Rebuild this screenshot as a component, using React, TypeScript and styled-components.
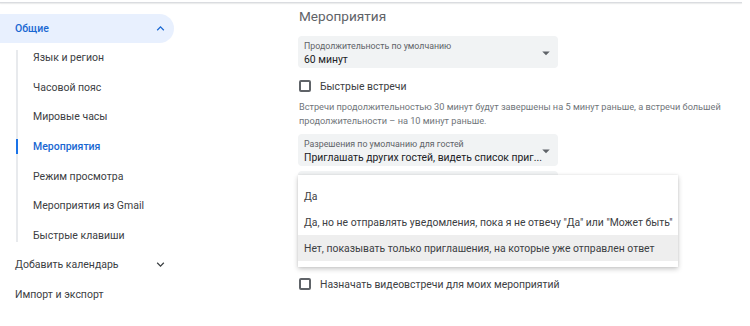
import React from 'react';
import styled, { createGlobalStyle } from 'styled-components';

const GlobalStyle = createGlobalStyle`
  html, body {
    margin: 0;
    padding: 0;
    background: #ffffff;
    font-family: Roboto, "Noto Sans", Arial, sans-serif;
    color: #3c4043;
  }
`;

const Page = styled.div`
  width: 750px;
  height: 326px;
  overflow: hidden;
  border-top: 2px solid #ffffff;
  display: flex;
  flex-direction: column;
`;

const TopEdge = styled.div`
  height: 1px;
  margin-right: 8px;
  background: #dadce0;
  box-shadow: 0 1px 1px rgba(60, 64, 67, 0.12);
`;

const Body = styled.div`
  display: flex;
  flex: 1;
`;

const Sidebar = styled.nav`
  width: 298px;
  flex-shrink: 0;
  padding-top: 11px;
`;

const GroupHead = styled.div<{ $open?: boolean }>`
  width: 174px;
  box-sizing: border-box;
  height: ${(p) => (p.$open ? '29px' : '29.6px')};
  padding: 0 6px 0 15px;
  display: flex;
  align-items: center;
  justify-content: space-between;
  border-radius: 0 15px 15px 0;
  background: ${(p) => (p.$open ? '#e8f0fe' : 'transparent')};
  color: ${(p) => (p.$open ? '#1967d2' : '#3c4043')};
  font-size: 10.5px;
  font-weight: ${(p) => (p.$open ? 500 : 400)};
`;

const SubList = styled.ul`
  list-style: none;
  margin: 0 0 0 16px;
  padding: 0;
  position: relative;

  &::before {
    content: '';
    position: absolute;
    left: 0;
    top: 7px;
    bottom: 8px;
    width: 2px;
    background: #e8eaed;
  }
`;

const SubItem = styled.li<{ $active?: boolean }>`
  position: relative;
  height: 29.6px;
  display: flex;
  align-items: center;
  padding-left: 17px;
  font-size: 10.5px;
  color: ${(p) => (p.$active ? '#1967d2' : '#3c4043')};
  font-weight: ${(p) => (p.$active ? 500 : 400)};

  &::before {
    content: '';
    display: ${(p) => (p.$active ? 'block' : 'none')};
    position: absolute;
    left: 0;
    top: 7px;
    width: 2px;
    height: 15px;
    background: #1a73e8;
  }
`;

const Main = styled.main`
  flex: 1;
  padding-top: 3px;
`;

const Heading = styled.h2`
  margin: 0 0 0 1px;
  font-size: 13.6px;
  line-height: 20px;
  font-weight: 400;
  color: #5f6368;
`;

const SelectBox = styled.div<{ $mt: number }>`
  position: relative;
  margin-top: ${(p) => p.$mt}px;
  width: 260px;
  height: 32px;
  box-sizing: border-box;
  padding: 5px 24px 0 6px;
  background: #f1f3f4;
  border-radius: 4px;
  display: flex;
  flex-direction: column;
`;

const SelectLabel = styled.span`
  font-size: 8.8px;
  line-height: 11px;
  color: #5f6368;
`;

const SelectValue = styled.span`
  font-size: 10.4px;
  line-height: 14px;
  margin-top: 1px;
  color: #202124;
  white-space: nowrap;
`;

const Arrow = styled.svg`
  position: absolute;
  right: 3px;
  top: 8px;
  width: 18px;
  height: 18px;
  fill: #5f6368;
`;

const CheckRow = styled.label<{ $mt: number }>`
  margin-top: ${(p) => p.$mt}px;
  display: flex;
  align-items: center;
  gap: 9px;
  font-size: 10.4px;
  color: #3c4043;
  height: 14px;
`;

const Box = styled.span`
  width: 12px;
  height: 12px;
  box-sizing: border-box;
  margin-left: 1px;
  border: 2px solid #5f6368;
  border-radius: 2px;
`;

const Help = styled.p`
  margin: 7px 0 0 1px;
  font-size: 9.2px;
  line-height: 14px;
  color: #70757a;
`;

const Menu = styled.ul`
  position: absolute;
  left: 0;
  top: 4px;
  z-index: 2;
  width: 380px;
  margin: 0;
  padding: 8px 0 6px;
  list-style: none;
  background: #ffffff;
  box-shadow: 0 2px 5px rgba(0, 0, 0, 0.22), 0 0 2px rgba(0, 0, 0, 0.08);
`;

const MenuItem = styled.li<{ $hover?: boolean }>`
  height: 26px;
  display: flex;
  align-items: center;
  padding-left: 6px;
  font-size: 10.4px;
  color: #3c4043;
  background: ${(p) => (p.$hover ? '#eeeeee' : 'transparent')};
  white-space: nowrap;
`;

const Chevron = ({ up, color }: { up?: boolean; color: string }) => (
  <svg width="15" height="15" viewBox="0 0 24 24" fill={color}>
    {up ? (
      <path d="M7.41 15.41L12 10.83l4.59 4.58L18 14l-6-6-6 6z" />
    ) : (
      <path d="M7.41 8.59L12 13.17l4.59-4.58L18 10l-6 6-6-6z" />
    )}
  </svg>
);

const DropArrow = () => (
  <Arrow viewBox="0 0 24 24">
    <path d="M7 10l5 5 5-5z" />
  </Arrow>
);

const subItems = [
  'Язык и регион',
  'Часовой пояс',
  'Мировые часы',
  'Мероприятия',
  'Режим просмотра',
  'Мероприятия из Gmail',
  'Быстрые клавиши',
];

const options = [
  'Да',
  'Да, но не отправлять уведомления, пока я не отвечу "Да" или "Может быть"',
  'Нет, показывать только приглашения, на которые уже отправлен ответ',
];

const App: React.FC = () => {
  return (
    <Page>
      <GlobalStyle />
      <TopEdge />
      <Body>
        <Sidebar>
          <GroupHead $open>
            Общие
            <Chevron up color="#1967d2" />
          </GroupHead>
          <SubList>
            {subItems.map((s) => (
              <SubItem key={s} $active={s === 'Мероприятия'}>
                {s}
              </SubItem>
            ))}
          </SubList>
          <GroupHead>
            Добавить календарь
            <Chevron color="#3c4043" />
          </GroupHead>
          <GroupHead>Импорт и экспорт</GroupHead>
        </Sidebar>

        <Main>
          <Heading>Мероприятия</Heading>
          <SelectBox $mt={10}>
            <SelectLabel>Продолжительность по умолчанию</SelectLabel>
            <SelectValue>60 минут</SelectValue>
            <DropArrow />
          </SelectBox>
          <CheckRow $mt={11}>
            <Box />
            Быстрые встречи
          </CheckRow>
          <Help>
            Встречи продолжительностью 30 минут будут завершены на 5 минут раньше, а встречи большей
            <br />
            продолжительности – на 10 минут раньше.
          </Help>
          <SelectBox $mt={6}>
            <SelectLabel>Разрешения по умолчанию для гостей</SelectLabel>
            <SelectValue>Приглашать других гостей, видеть список приг...</SelectValue>
            <DropArrow />
          </SelectBox>
          <SelectBox $mt={5}>
            <SelectLabel>Добавлять приглашения в мой календарь</SelectLabel>
            <SelectValue>Да</SelectValue>
            <DropArrow />
            <Menu>
              {options.map((o, i) => (
                <MenuItem key={o} $hover={i === 2}>
                  {o}
                </MenuItem>
              ))}
            </Menu>
          </SelectBox>
          <CheckRow $mt={74}>
            <Box />
            Назначать видеовстречи для моих мероприятий
          </CheckRow>
        </Main>
      </Body>
    </Page>
  );
};

export default App;
